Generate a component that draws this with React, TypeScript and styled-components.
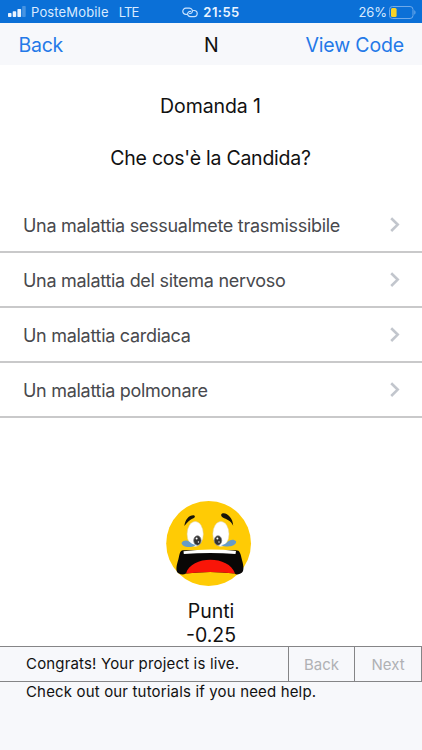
import React from "react";
import styled, { createGlobalStyle } from "styled-components";

const GlobalStyle = createGlobalStyle`
  * { box-sizing: border-box; }
  body { margin: 0; background: #fff; }
`;

const Screen = styled.div`
  width: 422px;
  height: 750px;
  display: flex;
  flex-direction: column;
  overflow: hidden;
  background: #fff;
  color: #111;
  font-family: Inter, "Liberation Sans", sans-serif;
  white-space: nowrap;
`;

const StatusBar = styled.header`
  height: 23px;
  flex: none;
  display: grid;
  grid-template-columns: 1fr auto 1fr;
  align-items: center;
  padding: 1px 6px 0 8px;
  background: #0b70d7;
  color: #d9ebff;
  font-size: 13px;
  line-height: 20px;
`;

const StatusGroup = styled.div<{ $end?: boolean }>`
  display: flex;
  align-items: center;
  justify-content: ${(p) => (p.$end ? "flex-end" : "flex-start")};
`;

const Carrier = styled.span`
  margin-left: 4px;
  letter-spacing: 0.15px;
`;

const Network = styled.span`
  margin-left: 10px;
  letter-spacing: -0.8px;
`;

const Clock = styled.span`
  margin: 0 2px 0 5px;
  font-weight: 600;
  letter-spacing: 0.45px;
  color: #eaf4ff;
`;

const Percent = styled.span`
  margin-right: 2px;
  letter-spacing: -0.1px;
`;

const NavBar = styled.nav`
  height: 42px;
  flex: none;
  display: grid;
  grid-template-columns: 1fr auto 1fr;
  align-items: center;
  padding: 1px 18px 0 18.5px;
  background: #f7f8fb;
  font-size: 19.5px;
`;

const NavLink = styled.a<{ $end?: boolean }>`
  color: #2479e8;
  letter-spacing: ${(p) => (p.$end ? "-0.15px" : "-0.25px")};
  text-align: ${(p) => (p.$end ? "right" : "left")};
`;

const Question = styled.section`
  height: 133px;
  flex: none;
  padding-top: 29px;
  text-align: center;
`;

const Heading = styled.h1<{ $tracking: number }>`
  margin: 0 1px 28px 0;
  font-size: 19.5px;
  font-weight: 400;
  line-height: 24px;
  letter-spacing: ${(p) => p.$tracking}px;
`;

const Answers = styled.ul`
  margin: 0;
  padding: 0;
  list-style: none;
`;

const Answer = styled.li`
  height: 55px;
  display: flex;
  align-items: center;
  justify-content: space-between;
  padding: 1px 21px 0 23px;
  border-bottom: 2px solid #c9c9ca;
  color: #48494d;
  font-size: 18px;
  letter-spacing: -0.29px;
`;

const Score = styled.section`
  height: 228px;
  flex: none;
  display: flex;
  flex-direction: column;
  align-items: center;
  padding-top: 83px;
  font-size: 19.5px;
  line-height: 24px;
  > * { flex: none; }
  svg { display: block; margin: 0 4px 12px 0; }
`;

const Tutorial = styled.footer`
  flex: 1;
  background: #f7f8fb;
  font-size: 15px;
`;

const TutorialBar = styled.div`
  height: 36px;
  display: grid;
  grid-template-columns: 288px 66px 68px;
  border: solid #858587;
  border-width: 1px 0;
`;

const Message = styled.div`
  padding-left: 26px;
  line-height: 34px;
  letter-spacing: 0.17px;
`;

const Hint = styled.p`
  margin: 0;
  padding-left: 26px;
  line-height: 20px;
  letter-spacing: 0.16px;
`;

const StepButton = styled.button`
  padding: 0;
  border: 0 solid #858587;
  border-left-width: 1px;
  background: transparent;
  color: #b0b1b4;
  font: inherit;
  &:last-child { border-right-width: 1px; }
`;

const Signal = () => (
  <svg width="19" height="12" viewBox="0 0 19 12" fill="#eaf4ff">
    <rect y="7" width="3.5" height="4" rx=".7" />
    <rect x="4.7" y="5.3" width="3.5" height="5.7" rx=".7" />
    <rect x="9.4" y="3" width="3.7" height="8" rx=".7" />
    <rect x="14.2" y="0" width="3.5" height="11" rx=".7" opacity=".28" />
  </svg>
);

const Hotspot = () => (
  <svg width="16" height="11" viewBox="0 0 16 11" fill="none" stroke="#cce4ff" strokeWidth="1.2" strokeLinecap="round">
    <path d="M4.6 7.4H3.9a3.1 3.1 0 0 1 0-6.2h3.4c2.4 0 3.8 2.2 2.8 4-.6 1-1.5 1.4-2.5 1.3" />
    <path d="M11.4 3.5h.7a3.1 3.1 0 0 1 0 6.2H8.7c-2.4 0-3.8-2.2-2.8-4 .6-1 1.5-1.4 2.5-1.3" />
  </svg>
);

const Battery = () => (
  <svg width="27" height="13" viewBox="0 0 27 13">
    <rect x=".5" y=".5" width="23.5" height="12" rx="3" fill="none" stroke="#6faaea" />
    <rect x="2" y="2" width="5.6" height="9" rx="1.5" fill="#f9d327" />
    <path d="M25.3 4.3c1.6.6 1.6 3.8 0 4.4Z" fill="#6faaea" />
  </svg>
);

const Chevron = () => (
  <svg width="12" height="18" viewBox="0 0 12 18" fill="none" stroke="#c2c6cd" strokeWidth="2.6">
    <path d="m2.2 2.2 6.5 6.4-6.5 6.4" />
  </svg>
);

const ScaredFace = () => (
  <svg width="86" height="86" viewBox="0 0 86 86">
    <circle cx="42.6" cy="42.5" r="42.4" fill="#ffcb05" />
    <path d="M18.4 25c.4-6 4.5-11 9.3-10.8 1.6.4 1.6 1.8.2 2.8-3.6 1.2-6.5 4.1-9.5 8ZM67.2 24.8c-1.5-4-5.3-6.2-9-7.6-2.6-1-3.9-3.2-2.4-4.5C60.6 10.8 67 17 67.2 24.8Z" fill="#17140a" />
    <ellipse cx="29.2" cy="33" rx="8.1" ry="12.5" fill="#fff" stroke="#ddd5b8" strokeWidth=".5" />
    <ellipse cx="54.9" cy="33" rx="8.1" ry="12.5" fill="#fff" stroke="#ddd5b8" strokeWidth=".5" />
    <g fill="#333" stroke="#777" strokeWidth=".7">
      <ellipse cx="31.4" cy="39.5" rx="3.7" ry="4.7" />
      <ellipse cx="52" cy="39.5" rx="3.7" ry="4.7" />
    </g>
    <g fill="#fff">
      <circle cx="30.6" cy="37.5" r="1" />
      <circle cx="51.4" cy="37.5" r="1" />
      <circle cx="32.4" cy="41" r=".7" />
      <circle cx="53" cy="41" r=".7" />
    </g>
    <path d="M15.5 42c1.5-3.2 6-3.2 8.5-.8 2 2 4 2.7 6.7 2.3-4 3.6-14.2 3.8-15.2-1.5ZM70.2 40.5c-2.6-3.2-7-1.4-9 .8-2 2-4 2.7-6.3 2.6 5.5 2.8 15 1.8 15.3-3.4Z" fill="#679bc7" />
    <path d="M17 49.3h53c3.8 0 4.6 3.2 6 9.7 1.8 6.2 2.6 12-1.5 13.6Q70 74.5 68.8 72.5Q44 69.5 20 72.5Q16.5 74.5 13 72.6c-4.2-1.6-2.4-8.8-.6-14.4 1.4-4.8 1-8.3 4.6-8.9Z" fill="#090706" />
    <path d="M17.5 50.2q26.5-3.2 52.5-.2l-.5 3q-26-1.8-51.7.1Z" fill="#fff" />
    <path d="M20 72.5C25 54.5 63 54 69 72.5Q44 69.5 20 72.5Z" fill="#f91508" />
  </svg>
);

const answers = [
  "Una malattia sessualmete trasmissibile",
  "Una malattia del sitema nervoso",
  "Un malattia cardiaca",
  "Un malattia polmonare",
];

export default function App() {
  return (
    <>
      <GlobalStyle />
      <Screen>
        <StatusBar>
          <StatusGroup>
            <Signal />
            <Carrier>PosteMobile</Carrier>
            <Network>LTE</Network>
          </StatusGroup>
          <StatusGroup>
            <Hotspot />
            <Clock>21:55</Clock>
          </StatusGroup>
          <StatusGroup $end>
            <Percent>26%</Percent>
            <Battery />
          </StatusGroup>
        </StatusBar>
        <NavBar>
          <NavLink>Back</NavLink>
          <span>N</span>
          <NavLink $end>View Code</NavLink>
        </NavBar>
        <Question>
          <Heading $tracking={-0.08}>Domanda 1</Heading>
          <Heading $tracking={-0.25}>Che cos'è la Candida?</Heading>
        </Question>
        <Answers>
          {answers.map((text) => (
            <Answer key={text}>
              <span>{text}</span>
              <Chevron />
            </Answer>
          ))}
        </Answers>
        <Score>
          <ScaredFace />
          <span>Punti</span>
          <span>-0.25</span>
        </Score>
        <Tutorial>
          <TutorialBar>
            <Message>Congrats! Your project is live.</Message>
            <StepButton>Back</StepButton>
            <StepButton>Next</StepButton>
          </TutorialBar>
          <Hint>Check out our tutorials if you need help.</Hint>
        </Tutorial>
      </Screen>
    </>
  );
}
